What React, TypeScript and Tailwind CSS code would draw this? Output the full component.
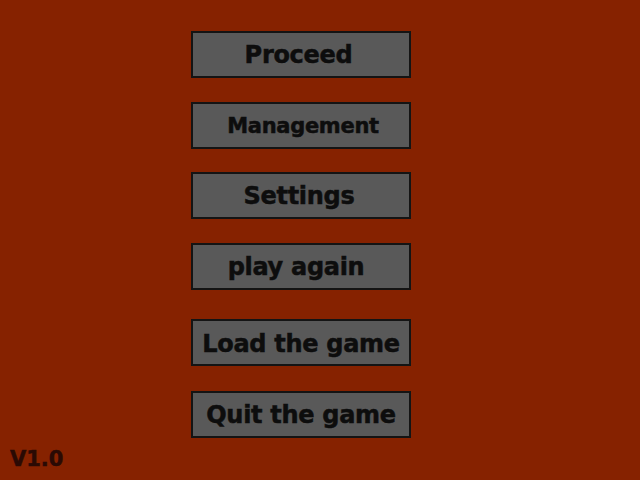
import React from 'react';

type MenuItem = {
  label: string;
  top: string;
  size: string;
  nudge: string;
};

const items: MenuItem[] = [
  { label: 'Proceed', top: 'mt-[31px]', size: 'text-[24px]', nudge: 'pr-[5px]' },
  { label: 'Management', top: 'mt-[24px]', size: 'text-[21px]', nudge: 'pl-[4px] pt-[3px]' },
  { label: 'Settings', top: 'mt-[23px]', size: 'text-[24px]', nudge: 'pr-[4px]' },
  { label: 'play again', top: 'mt-[24px]', size: 'text-[24px]', nudge: 'pr-[10px]' },
  { label: 'Load the game', top: 'mt-[29px]', size: 'text-[24px]', nudge: 'pt-[2px]' },
  { label: 'Quit the game', top: 'mt-[25px]', size: 'text-[24px]', nudge: '' },
];

const App: React.FC = () => {
  return (
    <div className="w-[640px] h-[480px] bg-[#862200] flex flex-col overflow-hidden font-['DejaVu_Sans',_'Verdana',_sans-serif]">
      <div className="flex flex-col pl-[191px]">
        {items.map((item) => (
          <button
            key={item.label}
            className={`${item.top} w-[220px] h-[47px] bg-[#595959] border-2 border-[#141414] flex items-center justify-center font-bold text-[#0d0d0d] [-webkit-text-stroke:0.5px_#0d0d0d] tracking-[-0.3px] whitespace-nowrap ${item.size} ${item.nudge}`}
          >
            {item.label}
          </button>
        ))}
      </div>
      <div className="mt-[9px] pl-[10px] text-[21px] font-bold leading-[24px] text-[#2a0a04] [-webkit-text-stroke:0.5px_#2a0a04]">
        V1.0
      </div>
    </div>
  );
};

export default App;
